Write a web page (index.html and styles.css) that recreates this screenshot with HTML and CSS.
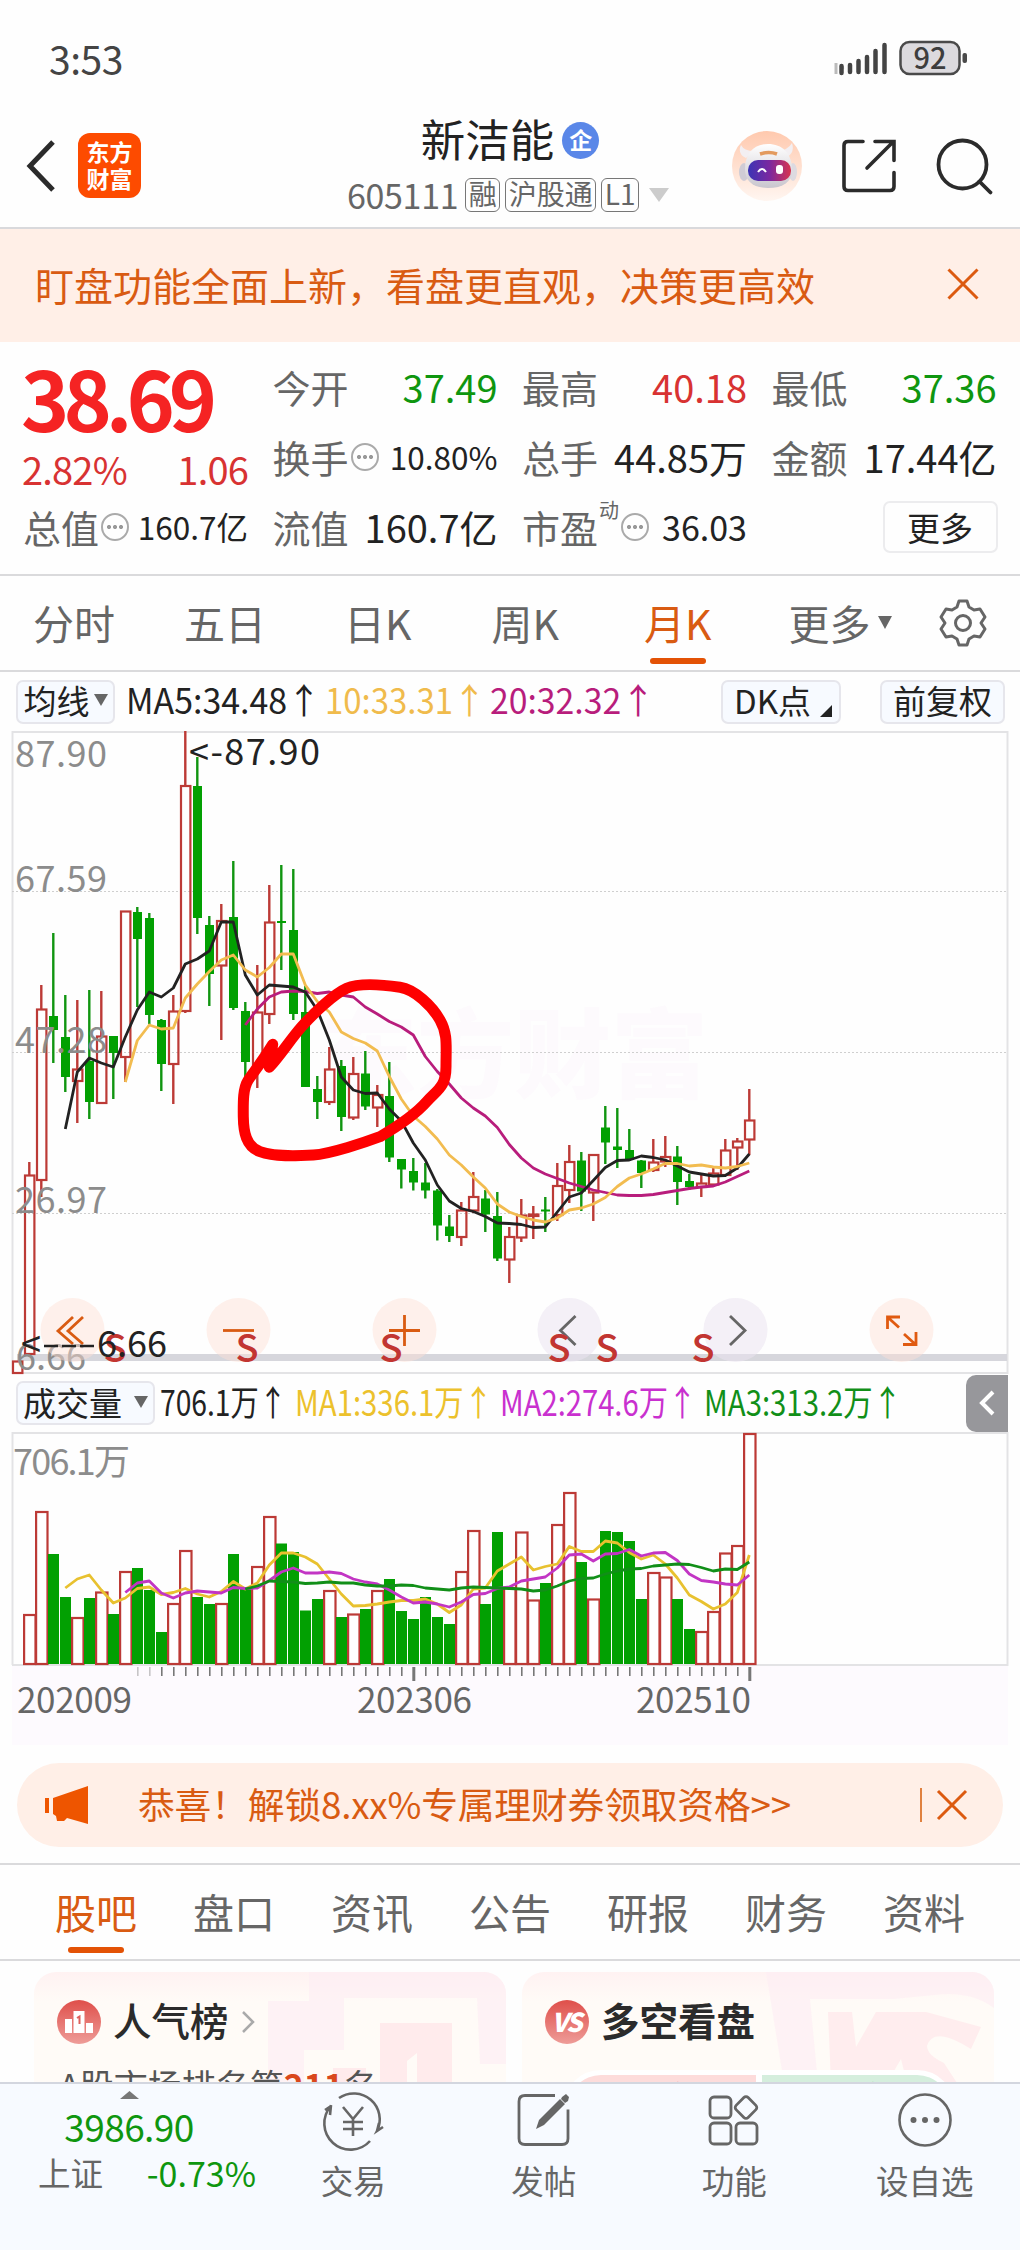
FILE: index.html
```html
<!DOCTYPE html>
<html lang="zh-CN">
<head>
    <meta charset="utf-8">
    <title>新洁能 605111</title>
    <link rel="stylesheet" href="styles.css">
</head>
<body>
    <div class="status-bar">
        <span class="clock">3:53</span>
        <svg class="status-icons" width="138" height="38" viewBox="830 41 138 38">
            <path d="M836 64v11M841 66l2 4" stroke="#bbb" stroke-width="3"/>
            <path d="M841.500 67v7M850 66v7M858.500 62v11M867 58v15M875.500 52v21M884.500 46v27" stroke="#444" stroke-width="4.500" stroke-linecap="round"/>
            <rect x="900.500" y="43" width="59" height="32" rx="9" fill="#dcdade" stroke="#4a4a4a" stroke-width="2.500"/>
            <rect x="962.500" y="54" width="4.500" height="10" rx="2" fill="#4a4a4a"/>
            <text x="930" y="69.500" text-anchor="middle" class="battery-text">92</text>
        </svg>
    </div>

    <header class="header">
        <div class="header-left">
            <svg width="30" height="52" viewBox="0 0 30 52"><path d="M27 2L4 26l23 24" fill="none" stroke="#2b2b2b" stroke-width="5"/></svg>
            <div class="logo"><span>东方</span><span>财富</span></div>
        </div>
        <div class="header-title">
            <div class="stock-name">新洁能<span class="badge">企</span></div>
            <div class="stock-code">
                <span class="code">605111</span>
                <span class="tag">融</span>
                <span class="tag">沪股通</span>
                <span class="tag">L1</span>
                <svg width="20" height="14" viewBox="0 0 20 14"><path d="M0 0h20L10 14z" fill="#ccc"/></svg>
            </div>
        </div>
        <div class="header-right">
            <svg width="70" height="70" viewBox="0 0 70 70">
                <defs>
                    <linearGradient id="halo" x1="0" y1="0" x2="0" y2="1"><stop offset="0" stop-color="#ffc9ae"/><stop offset="1" stop-color="#fff6f1"/></linearGradient>
                    <linearGradient id="visor"><stop offset="0" stop-color="#3b35b5"/><stop offset=".5" stop-color="#7b28a0"/><stop offset="1" stop-color="#d8354f"/></linearGradient>
                    <linearGradient id="helmet" x1="0" y1="0" x2="0" y2="1"><stop offset="0" stop-color="#fff"/><stop offset="1" stop-color="#c9c6ce"/></linearGradient>
                </defs>
                <circle cx="35" cy="35" r="35" fill="url(#halo)"/>
                <path d="M9 14q-4 9 5 13l8-7q-10 0-13-6zM60 12q3 10-5 14l-9-6q10-1 14-8z" fill="#f3eff2"/>
                <ellipse cx="12" cy="41" rx="5" ry="9" fill="#cfccd5"/>
                <ellipse cx="61" cy="41" rx="4" ry="9" fill="#dddae0"/>
                <path d="M13 38C13 22 22 13 36 13s24 9 24 26c0 12-9 18-24 18S13 50 13 38z" fill="url(#helmet)"/>
                <path d="M28 23q9-3 17 0" fill="none" stroke="#e39a5e" stroke-width="3.500"/>
                <rect x="16" y="29" width="43" height="21" rx="10" fill="url(#visor)"/>
                <path d="M26 41q4-6 8 0" fill="none" stroke="#fff" stroke-width="2"/>
                <rect x="44" y="34" width="7" height="9" rx="3" fill="#fff"/>
            </svg>
            <svg width="54" height="54" viewBox="840 138 54 54"><path d="M861 140.500h-15q-4 0-4 4v41q0 4 4 4h42q4 0 4-4v-14M873 140.500h19v19M865 167l26-26" fill="none" stroke="#2b2b2b" stroke-width="3.600" stroke-linecap="round"/></svg>
            <svg width="56" height="56" viewBox="936 136 56 56"><g fill="none" stroke="#2b2b2b" stroke-width="3.800"><circle cx="962.500" cy="162.500" r="24"/><path d="M979.500 179.500L990.500 190.500" stroke-linecap="round"/></g></svg>
        </div>
    </header>

    <div class="banner">
        <span>盯盘功能全面上新，看盘更直观，决策更高效</span>
        <svg width="32" height="32" viewBox="0 0 32 32"><path d="M1.500 1.500l29 29M30.500 1.500l-29 29" stroke="#dc5a10" stroke-width="3"/></svg>
    </div>

    <section class="quote">
        <div class="price-block">
            <div class="price">38.69</div>
            <div class="change"><span>2.82%</span><span>1.06</span></div>
        </div>
        <div class="item"><label>今开</label><b class="down">37.49</b></div>
        <div class="item"><label>最高</label><b class="up">40.18</b></div>
        <div class="item"><label>最低</label><b class="down">37.36</b></div>
        <div class="item"><label>换手</label><i class="more"></i><b class="small">10.80%</b></div>
        <div class="item"><label>总手</label><b>44.85万</b></div>
        <div class="item"><label>金额</label><b>17.44亿</b></div>
        <div class="item"><label>总值</label><i class="more"></i><b class="small">160.7亿</b></div>
        <div class="item"><label>流值</label><b>160.7亿</b></div>
        <div class="item"><label>市盈<sup>动</sup></label><i class="more shifted"></i><b class="medium">36.03</b></div>
        <div class="item"><button class="more-btn">更多</button></div>
    </section>

    <nav class="period-tabs">
        <a>分时</a>
        <a>五日</a>
        <a>日K</a>
        <a>周K</a>
        <a class="active">月K</a>
        <a>更多<svg width="14" height="13" viewBox="0 0 14 13"><path d="M0 0h14L7 13z" fill="#666"/></svg></a>
        <svg class="gear" width="48" height="48" viewBox="0 0 48 48"><g fill="none" stroke="#666" stroke-width="3" stroke-linejoin="round"><path d="M20 2h8l2 6 5 3 6-1 5 8-4 6 4 6-5 8-6-1-5 3-2 6h-8l-2-6-5-3-6 1-5-8 4-6-4-6 5-8 6 1 5-3z"/><circle cx="24" cy="24" r="7.500"/></g></svg>
    </nav>

    <div class="indicator-row ma-row">
        <button class="chip ma-chip">均线<svg width="14" height="12" viewBox="0 0 14 12"><path d="M0 0h14L7 12z" fill="#666"/></svg></button>
        <svg class="indicator-text" width="530" height="48" viewBox="128 678 530 48">
            <text x="126" y="714" textLength="195" lengthAdjust="spacingAndGlyphs" fill="#222">MA5:34.48↑</text>
            <text x="325" y="714" textLength="161" lengthAdjust="spacingAndGlyphs" fill="#f0bb4c">10:33.31↑</text>
            <text x="490" y="714" textLength="165" lengthAdjust="spacingAndGlyphs" fill="#b81d7c">20:32.32↑</text>
        </svg>
        <button class="chip dk-chip">DK点<svg width="12" height="12" viewBox="0 0 12 12"><path d="M12 0v12H0z" fill="#222"/></svg></button>
        <button class="chip fq-chip">前复权</button>
    </div>

    <svg id="kline" class="chart" width="1020" height="643" viewBox="0 731 1020 643"></svg>

    <div class="indicator-row vol-row">
        <button class="chip vol-chip">成交量<svg width="14" height="12" viewBox="0 0 14 12"><path d="M0 0h14L7 12z" fill="#666"/></svg></button>
        <svg class="indicator-text" width="760" height="48" viewBox="160 1379 760 48">
            <text x="160" y="1416" textLength="127" lengthAdjust="spacingAndGlyphs" fill="#222">706.1万↑</text>
            <text x="295" y="1416" textLength="198" lengthAdjust="spacingAndGlyphs" fill="#ecc12c">MA1:336.1万↑</text>
            <text x="500" y="1416" textLength="197" lengthAdjust="spacingAndGlyphs" fill="#c930cf">MA2:274.6万↑</text>
            <text x="704" y="1416" textLength="198" lengthAdjust="spacingAndGlyphs" fill="#118f18">MA3:313.2万↑</text>
        </svg>
        <div class="side-handle"><svg width="16" height="26" viewBox="0 0 16 26"><path d="M14 2L3 13l11 11" fill="none" stroke="#fff" stroke-width="4"/></svg></div>
    </div>

    <svg id="volume" class="chart" width="1020" height="313" viewBox="0 1432 1020 313"></svg>

    <div class="promo">
        <svg width="44" height="38" viewBox="45 1785 44 38"><path d="M45 1797h4v15h-4zM53 1797l35-12v38l-21-6-3 3h-7l-1-5-3-2z" fill="#ee5500"/></svg>
        <span class="promo-text">恭喜！解锁8.xx%专属理财券领取资格&gt;&gt;</span>
        <span class="promo-line"></span>
        <svg width="32" height="32" viewBox="0 0 32 32"><path d="M2 2l28 28M30 2l-28 28" stroke="#dc5a10" stroke-width="3"/></svg>
    </div>

    <nav class="section-tabs">
        <a class="active">股吧</a>
        <a>盘口</a>
        <a>资讯</a>
        <a>公告</a>
        <a>研报</a>
        <a>财务</a>
        <a>资料</a>
    </nav>

    <section class="cards">
        <div class="card">
            <svg class="ghost" width="240" height="111" viewBox="266 1971 240 111">
                <path d="M309 1971h197v92h-26l-3-66H344v52h-40v33h-36v-82h41z" fill="#fdecf3" opacity=".6"/>
                <path d="M380 2022h72v60h-35v-30l-10 8v22h-27zM333 2067h33v15h-33z" fill="#ffe7e9" opacity=".8"/>
            </svg>
            <div class="card-title">
                <svg width="44" height="44" viewBox="0 0 44 44">
                    <defs><linearGradient id="red" x1="0" y1="0" x2="0" y2="1"><stop offset="0" stop-color="#df4f4a"/><stop offset="1" stop-color="#ee9c98"/></linearGradient></defs>
                    <circle cx="22" cy="22" r="22" fill="url(#red)"/>
                    <path d="M8 19h7v14H8zM16.500 11h11v22h-11zM29 23h7v10h-7z" fill="#fff"/>
                    <path d="M20 18l2.500-1.500V24" fill="none" stroke="#dd605b" stroke-width="2"/>
                </svg>
                <span>人气榜</span>
                <svg class="arrow" width="14" height="22" viewBox="0 0 14 22"><path d="M2 1l10 10L2 21" fill="none" stroke="#aaa" stroke-width="2.500"/></svg>
            </div>
            <div class="rank">A股市场排名第<b>211</b>名</div>
        </div>
        <div class="card">
            <svg class="ghost" width="240" height="111" viewBox="754 1971 240 111">
                <path d="M766 1971h228v36q-24-18-60-13l-40 4h-84l8 84h-34z" fill="#fdecf3" opacity=".6"/>
                <path d="M828 2011h24l4 35 20-35h50l55 15-10 22q-38-24-44-3 0 9 17 17l13 20h-50l-6-24-14 24h-56z" fill="#ffe7e9" opacity=".7"/>
            </svg>
            <div class="card-title">
                <svg width="44" height="44" viewBox="0 0 44 44"><circle cx="22" cy="22" r="22" fill="url(#red)"/><text x="21" y="32" text-anchor="middle" class="vs-text">VS</text></svg>
                <span>多空看盘</span>
            </div>
            <div class="vote"><span class="bull">看多</span><span class="bear">看空</span></div>
        </div>
    </section>

    <footer class="bottom-bar">
        <div class="index-box">
            <svg width="19" height="8" viewBox="0 0 19 8"><path d="M0 8L9.500 0 19 8z" fill="#777"/></svg>
            <div class="index-value">3986.90</div>
            <div class="index-row"><span>上证</span><span class="down">-0.73%</span></div>
        </div>
        <div class="bar-item">
            <svg width="64" height="56" viewBox="321 2092 64 56"><g fill="none" stroke="#666" stroke-width="2.600"><path d="M339 2098a26 26 0 0 1 38 33l6-4M377 2131l2-8M370 2141a26 26 0 0 1-39-35l-6 4M331 2105l-1 10M343 2107l10 12 10-12M353 2119v17M343 2122h20M343 2129h20"/></g></svg>
            <span>交易</span>
        </div>
        <div class="bar-item">
            <svg width="56" height="56" viewBox="516 2092 56 56"><path d="M555 2095.500h-30q-6 0-6 6v37q0 6 6 6h37q6 0 6-6v-29" fill="none" stroke="#666" stroke-width="2.800"/><path d="M536 2129l3-9 21-21 5 5-21 21zM562 2097l4-3 3 3-1 4-3 2-4-4z" fill="#666"/></svg>
            <span>发帖</span>
        </div>
        <div class="bar-item">
            <svg width="56" height="56" viewBox="707 2092 56 56"><g fill="none" stroke="#666" stroke-width="2.800"><rect x="711" y="2097" width="21" height="21" rx="4"/><rect x="711" y="2123" width="21" height="21" rx="4"/><rect x="737" y="2123" width="21" height="21" rx="4"/><rect x="738.500" y="2099" width="17" height="17" rx="3" transform="rotate(45 747 2107.500)"/></g></svg>
            <span>功能</span>
        </div>
        <div class="bar-item">
            <svg width="56" height="56" viewBox="0 0 56 56"><circle cx="28" cy="28" r="25.500" fill="none" stroke="#666" stroke-width="2.600"/><g fill="#666"><circle cx="16.500" cy="28" r="3"/><circle cx="28" cy="28" r="3"/><circle cx="39.500" cy="28" r="3"/></g></svg>
            <span>设自选</span>
        </div>
    </footer>
    <script src="script.js"></script>
</body>
</html>
```
FILE: styles.css
```css
* {
    box-sizing: border-box;
}

body {
    margin: 0;
    width: 1020px;
    height: 2250px;
    overflow: hidden;
    background: #fefefe;
    color: #222;
    font-family: "Noto Sans CJK SC", "Noto Sans", sans-serif;
    font-size: 38px;
    line-height: 1;
}

svg {
    display: block;
    flex: none;
    overflow: visible;
}

svg text {
    font-family: "Noto Sans CJK SC", sans-serif;
}

button {
    font-family: inherit;
    color: inherit;
    padding: 0;
}

.up { color: #d83232; }
.down { color: #0f960f; }

/* status bar */
.status-bar {
    display: flex;
    justify-content: space-between;
    align-items: flex-start;
    height: 104px;
    padding: 39px 52px 0 49px;
    color: #444;
}

.clock {
    font-size: 39px;
    letter-spacing: -0.5px;
}

.status-icons {
    margin-top: 1px;
}

.battery-text {
    font-size: 29px;
    font-weight: 500;
    fill: #3d3d3d;
}

/* header */
.header {
    display: grid;
    grid-template-columns: 300px 1fr 300px;
    align-items: center;
    height: 125px;
    border-bottom: 2px solid #d9d9dc;
}

.header-left {
    display: flex;
    align-items: center;
    gap: 22px;
    padding-left: 26px;
}

.logo {
    display: flex;
    flex-direction: column;
    align-items: center;
    justify-content: center;
    width: 63px;
    height: 65px;
    padding-bottom: 2px;
    border-radius: 12px;
    background: #fd4b00;
    color: #fff;
    font-size: 23px;
    font-weight: 700;
    line-height: 27px;
}

.header-title {
    display: flex;
    flex-direction: column;
    align-items: center;
    padding-top: 2px;
}

.stock-name {
    display: flex;
    align-items: center;
    gap: 8px;
    height: 56px;
    font-size: 44.500px;
}

.badge {
    width: 37px;
    height: 37px;
    margin-top: 4px;
    border-radius: 50%;
    background: #5a87e8;
    color: #fff;
    font-size: 23px;
    font-weight: 700;
    line-height: 34px;
    text-align: center;
}

.stock-code {
    display: flex;
    align-items: center;
    gap: 5px;
    height: 56px;
    margin-left: -4px;
    color: #666;
    white-space: nowrap;
}

.stock-code svg {
    margin-left: 5px;
}

.code {
    font-size: 34px;
    margin-right: 2px;
    letter-spacing: -0.3px;
}

.tag {
    height: 34px;
    padding: 0 2.500px;
    border: 1.5px solid #777;
    border-radius: 6px;
    font-size: 28px;
    line-height: 28px;
}

.header-right {
    display: flex;
    align-items: center;
    justify-content: flex-end;
    gap: 40px;
    padding-right: 28px;
}

/* notice */
.banner {
    display: flex;
    justify-content: space-between;
    align-items: center;
    height: 113px;
    padding: 0 41px 3px 35px;
    background: #ffefe7;
    color: #d95b12;
    font-size: 39px;
}

/* quote */
.quote {
    display: grid;
    grid-template-columns: repeat(4, 225px);
    grid-template-rows: repeat(3, 70px);
    column-gap: 24.500px;
    height: 232px;
    padding: 10px 0 0 23px;
}

.price-block {
    grid-row: span 2;
    color: #d83232;
}

.price {
    height: 84px;
    padding-top: 4px;
    margin-left: -2px;
    color: #f52323;
    font-size: 82px;
    font-weight: 700;
    letter-spacing: -6px;
}

.change {
    display: flex;
    justify-content: space-between;
    padding-top: 14px;
    margin-left: -1px;
    letter-spacing: -0.8px;
}

.item {
    display: flex;
    align-items: center;
    white-space: nowrap;
}

.item label {
    position: relative;
    color: #666;
}

.item sup {
    position: absolute;
    left: 77px;
    top: -8px;
    font-size: 20px;
    line-height: 20px;
}

.item b {
    margin-left: auto;
    font-weight: 400;
}

.item .small {
    font-size: 31.500px;
}

.item .medium {
    font-size: 34px;
}

/* circled three dots */
.more {
    width: 28px;
    height: 28px;
    margin-left: 2px;
    border: 2px solid #aaa;
    border-radius: 50%;
    background: radial-gradient(circle, #999 1.800px, transparent 2.300px) center / 6px 6px no-repeat,
        radial-gradient(circle, #999 1.800px, transparent 2.300px) 3px center / 6px 6px no-repeat,
        radial-gradient(circle, #999 1.800px, transparent 2.300px) 15px center / 6px 6px no-repeat;
}

.more.shifted {
    margin-left: 23px;
}

.more-btn {
    width: 115px;
    height: 52px;
    margin: 0 -1px 0 auto;
    border: 2px solid #ececee;
    border-radius: 7px;
    background: none;
    font-size: 33px;
    line-height: 44px;
}

/* tabs */
.period-tabs,
.section-tabs {
    display: flex;
    height: 98px;
    border-top: 2px solid #dadadc;
    border-bottom: 2px solid #dadadc;
    color: #666;
    font-size: 41px;
}

.period-tabs {
    padding-left: 33px;
}

.period-tabs a,
.section-tabs a {
    display: flex;
    flex-direction: column;
    justify-content: center;
    position: relative;
    padding-bottom: 2px;
}

.period-tabs a:nth-child(2) { margin-left: 69px; }
.period-tabs a:nth-child(3) { margin-left: 78px; }
.period-tabs a:nth-child(4) { margin-left: 80px; }
.period-tabs a:nth-child(5) { margin-left: 85px; }

.period-tabs a:nth-child(6) {
    flex-direction: row;
    align-items: center;
    gap: 7px;
    margin-left: 77px;
}

.active {
    color: #d95b12;
}

.active::after {
    content: "";
    position: absolute;
    bottom: 6px;
    left: calc(50% - 28px);
    width: 56px;
    height: 6px;
    border-radius: 3px;
    background: #e35205;
}

.gear {
    align-self: center;
    margin-left: auto;
    margin-right: 33px;
}

/* indicator rows */
.indicator-row {
    display: flex;
    align-items: center;
    padding-left: 16px;
}

.ma-row {
    height: 59px;
}

.vol-row {
    height: 58px;
}

.chip {
    display: flex;
    align-items: center;
    justify-content: center;
    height: 44px;
    padding-bottom: 3px;
    border: 2px solid #e6e6ec;
    border-radius: 7px;
    background: #f7faff;
    font-size: 33px;
    line-height: 38px;
}

.chip svg {
    margin-left: 4px;
}

.ma-chip {
    width: 99px;
}

.ma-row .indicator-text {
    margin-left: 13px;
}

.dk-chip {
    width: 120px;
    margin-left: 63px;
}

.dk-chip svg {
    align-self: flex-end;
    margin: 0 -4px 2px 9px;
}

.fq-chip {
    width: 125px;
    margin-left: 39px;
}

.vol-chip {
    width: 139px;
}

.vol-chip svg {
    margin-left: 12px;
}

.vol-row .indicator-text {
    margin-left: 5px;
}

.indicator-text text {
    font-size: 35px;
}

.side-handle {
    display: flex;
    align-items: center;
    justify-content: center;
    width: 42px;
    height: 57px;
    margin-left: 46px;
    border-radius: 10px 0 0 10px;
    background: #97979b;
}

/* charts */
.axis { font-size: 36px; fill: #8c8c8c; }
.date { font-size: 35px; fill: #666; }
.mark { font-size: 36px; fill: #222; }
.sell { font-size: 38px; font-weight: 500; fill: #c23531; }
.watermark { font-size: 97px; font-weight: 900; fill: #fdfafd; }

/* promo */
.promo {
    display: flex;
    align-items: center;
    height: 84px;
    margin: 18px 17px 16px;
    padding: 0 35px 0 28px;
    border-radius: 42px;
    background: #ffefe7;
    color: #d95b12;
    font-size: 36.800px;
}

.promo-text {
    margin-left: 49px;
    padding-bottom: 3px;
    letter-spacing: -0.2px;
    white-space: nowrap;
}

.promo-line {
    width: 2px;
    height: 34px;
    margin: 0 14px 0 auto;
    background: #e0813f;
}

.section-tabs {
    justify-content: space-between;
    padding: 0 55px;
}

/* cards */
.cards {
    display: flex;
    gap: 16px;
    height: 121px;
    padding: 11px 26px 0 34px;
    overflow: hidden;
}

.card {
    position: relative;
    width: 472px;
    height: 200px;
    padding: 28px 23px;
    border-radius: 22px;
    background: linear-gradient(#fff2f2, #fffbf7 30px);
    overflow: hidden;
}

.ghost {
    position: absolute;
    top: 0;
    right: 0;
}

.card-title {
    display: flex;
    align-items: center;
    gap: 12px;
    position: relative;
    height: 44px;
    font-size: 38.500px;
    font-weight: 700;
    color: #2b2b2b;
}

.card:first-child .card-title {
    font-weight: 500;
}

.card-title span {
    padding-bottom: 5px;
}

.vs-text {
    font-size: 26px;
    font-weight: 900;
    font-style: italic;
    letter-spacing: -2px;
    fill: #fff;
}

.rank {
    position: relative;
    margin-top: 24px;
    padding-left: 2px;
    color: #555;
    font-size: 34px;
}

.rank b {
    color: #d9481c;
}

.vote {
    display: flex;
    gap: 6px;
    position: relative;
    width: 392px;
    height: 76px;
    margin: 26px 0 0 18px;
    border: 5px solid #fff;
    border-radius: 38px;
    background: #fff;
    overflow: hidden;
    font-size: 34px;
    line-height: 44px;
    text-align: center;
}

.bull {
    flex: 1;
    background: #fddcdb;
    color: #c23531;
}

.bear {
    flex: 1;
    background: #d5eedd;
    color: #159a4c;
}

/* bottom bar */
.bottom-bar {
    display: flex;
    position: relative;
    height: 168px;
    border-top: 2px solid #d3d6df;
    background: #f7faff;
    color: #666;
    font-size: 32.500px;
}

.index-box {
    display: flex;
    flex-direction: column;
    align-items: center;
    width: 258px;
    padding-top: 7px;
}

.index-value {
    margin-top: 9px;
    color: #0f960f;
    font-size: 37px;
    letter-spacing: -0.6px;
}

.index-row {
    display: flex;
    justify-content: space-between;
    width: 218px;
    margin: 11px -36px 0 0;
}

.index-row .down {
    font-size: 34px;
}

.bar-item {
    display: flex;
    flex-direction: column;
    align-items: center;
    gap: 16px;
    flex: 1;
    padding-top: 8px;
}
```
FILE: script.js
```javascript
// candle: [color, high, open/close top, open/close bottom, low]
const candles = [
    ["r", 1361, 1361, 1373, 1373], ["r", 1162, 1175, 1354, 1354], ["r", 985, 1009, 1180, 1197], ["g", 933, 1016, 1030, 1063],
    ["g", 995, 1037, 1077, 1092], ["r", 1000, 1069, 1081, 1123], ["g", 990, 1061, 1102, 1119], ["r", 991, 1036, 1103, 1103],
    ["g", 1036, 1036, 1053, 1099], ["r", 911, 911, 1057, 1082], ["g", 907, 912, 939, 1007], ["g", 913, 918, 1015, 1024],
    ["g", 1019, 1020, 1064, 1091], ["r", 995, 1011, 1064, 1104], ["r", 731, 785.5, 1011, 1013], ["g", 757, 786, 918, 934],
    ["g", 916, 925, 974, 1006], ["r", 904, 920.5, 965.5, 1040], ["g", 861, 917, 1008, 1010], ["g", 1002, 1011, 1062, 1079],
    ["r", 965, 1012, 1067, 1088], ["r", 885, 922, 1014, 1024], ["g", 865, 921, 923, 970], ["g", 869, 930, 1014, 1020],
    ["g", 986, 1012, 1087, 1087], ["g", 1076, 1089, 1102, 1119], ["r", 1047, 1069, 1102, 1105], ["g", 1060, 1066, 1117, 1131],
    ["r", 1057, 1073.5, 1117.5, 1120], ["g", 1051, 1073.5, 1106.5, 1110], ["r", 1085, 1094.5, 1107.5, 1127], ["g", 1062, 1096, 1157.5, 1162],
    ["g", 1159, 1159, 1169.5, 1188.5], ["g", 1158, 1171, 1182.5, 1190.5], ["g", 1163, 1182.5, 1190.5, 1198.5], ["g", 1189, 1190.5, 1225.5, 1240.5],
    ["g", 1215, 1226.5, 1236, 1242], ["r", 1202, 1210, 1237, 1246], ["r", 1172, 1196.5, 1210.5, 1213], ["g", 1190, 1198.5, 1214.5, 1232],
    ["g", 1192, 1216, 1258.5, 1261], ["r", 1227, 1236.5, 1259.5, 1283], ["r", 1199, 1215, 1237.5, 1242], ["r", 1206, 1214, 1216, 1239],
    ["g", 1197, 1209.5, 1211.5, 1232], ["r", 1163, 1185.5, 1215, 1221], ["r", 1145, 1161.5, 1190, 1203], ["g", 1152, 1160.5, 1191.5, 1211],
    ["r", 1154, 1154.5, 1192.5, 1221], ["g", 1106, 1127.5, 1142.5, 1164], ["g", 1108, 1146.5, 1150, 1168], ["g", 1129, 1150, 1160, 1161],
    ["g", 1160, 1160.5, 1173, 1188], ["r", 1139, 1162, 1170, 1172], ["r", 1136, 1156.5, 1161.5, 1167], ["g", 1146, 1156.5, 1182, 1205],
    ["g", 1174, 1181, 1187, 1190], ["r", 1173, 1183, 1187, 1197], ["r", 1166, 1173, 1184.5, 1187], ["r", 1139, 1150, 1175, 1175],
    ["r", 1138, 1141, 1147.5, 1170], ["r", 1089, 1120, 1139.5, 1155]
];

const volumes = [1663, 1614, 1511, 1554, 1597, 1617, 1598, 1591.5, 1614, 1571, 1568, 1590, 1632, 1603, 1550, 1597,
    1604, 1603, 1554, 1588, 1566, 1516, 1543.5, 1552, 1610.5, 1599, 1590, 1617, 1613.5, 1609, 1590, 1579,
    1611, 1619, 1597, 1617, 1624, 1571, 1530, 1604, 1532, 1587, 1531.5, 1599.5, 1583, 1524, 1492, 1562,
    1598.5, 1531, 1532, 1541, 1599, 1572, 1576.5, 1599, 1629, 1631, 1611, 1552.5, 1545, 1433];

// moving averages, first value sits on candle number "from"
const priceLines = [
    { from: 19, color: "#b81d7c", y: [1025, 1009, 997, 992, 991, 991.5, 993.5, 992, 995, 997, 1007, 1014, 1021.5, 1027, 1035, 1056.5, 1071.5, 1084, 1098, 1108, 1116, 1127.5, 1144.5, 1158, 1168, 1174, 1178.5, 1183, 1186.5, 1190, 1192.5, 1195, 1195.5, 1195.5, 1194.5, 1192.5, 1190.5, 1188.5, 1187, 1186, 1182, 1176.5, 1171] },
    { from: 4, color: "#222", y: [1129, 1072, 1058, 1063, 1067, 1037, 1010, 992, 997, 988, 964, 959, 951, 922, 922, 975, 995, 985, 986, 987, 992, 1010, 1040, 1077, 1090, 1093.5, 1093, 1109, 1121, 1143, 1160, 1185, 1201, 1208.5, 1211.5, 1216.5, 1223, 1223.5, 1224.5, 1227.5, 1227, 1212, 1197, 1193, 1180.5, 1167.5, 1160.5, 1160, 1156, 1157.5, 1160, 1166, 1172, 1174, 1176, 1175.5, 1168, 1154] },
    { from: 9, color: "#f2bc50", y: [1082, 1040.5, 1025, 1029, 1028, 998, 984, 971.5, 960, 955, 970, 977, 967.5, 954, 954, 985, 1001.5, 1012, 1032, 1038.5, 1043, 1051, 1076.5, 1099, 1116, 1126.5, 1139, 1155, 1165, 1177, 1188, 1204, 1212, 1216.5, 1220, 1222, 1218, 1210, 1208, 1204, 1197.5, 1186.5, 1178, 1174, 1169, 1163.5, 1163.5, 1166, 1165, 1167, 1168, 1166.5, 1163] }
];

const volumeLines = [
    { from: 4, color: "#e8c12f", y: [1588, 1579, 1575, 1590, 1603, 1598, 1588.5, 1587, 1594.5, 1592.5, 1588.5, 1594, 1597, 1591.5, 1581.5, 1589, 1583, 1565, 1553, 1553, 1557, 1564, 1579, 1594, 1606, 1605.5, 1604, 1602, 1600.5, 1600.5, 1599, 1604, 1612.5, 1605, 1589, 1588, 1571, 1564, 1557, 1570, 1566.5, 1564, 1546.5, 1551.5, 1551.5, 1541, 1543, 1552.5, 1559, 1555, 1564, 1578, 1595, 1601.5, 1609, 1604, 1592.5, 1555] },
    { from: 9, color: "#c235c4", y: [1592.5, 1583, 1581, 1593, 1598, 1593, 1591, 1592, 1593, 1587.5, 1588.5, 1588, 1580.5, 1572, 1568, 1573, 1573, 1572, 1573.5, 1579, 1582, 1584, 1590, 1597, 1603, 1602, 1604, 1607, 1602, 1594.5, 1593.5, 1588.5, 1587, 1581, 1579, 1577, 1568, 1555, 1554, 1561, 1554, 1553.5, 1549.5, 1556, 1553, 1552.5, 1560.5, 1574, 1580.5, 1582, 1584, 1585, 1575] },
    { from: 19, color: "#118f18", y: [1589, 1586, 1581, 1581.5, 1582, 1583.5, 1583, 1582, 1583, 1583, 1585, 1586, 1586, 1585, 1585.5, 1588, 1589, 1590, 1588, 1587, 1587.5, 1588, 1588.5, 1589, 1591, 1590, 1586, 1581, 1578.5, 1578, 1574, 1571, 1569, 1568.5, 1566, 1565, 1564, 1564.5, 1567.5, 1571, 1569, 1569.5, 1562] }
];

const RED = "#bc3a36";
const GREEN = "#02a002";

function xAt(i) {
    return 17.3 + i * 12;
}

function drawLines(lines) {
    return lines.map(function (line) {
        const pts = line.y.map((y, k) => xAt(line.from + k).toFixed(1) + "," + y).join(" ");
        return `<polyline points="${pts}" fill="none" stroke="${line.color}" stroke-width="2.8" stroke-linejoin="round"/>`;
    }).join("");
}

function drawCandle(c, i) {
    const x = xAt(i);
    if (c[0] === "g") {
        return `<path d="M${x} ${c[1]}V${c[4]}" stroke="#109510" stroke-width="2.4"/>
            <rect x="${x - 4.3}" y="${c[2]}" width="9" height="${c[3] - c[2]}" fill="${GREEN}"/>`;
    }
    return `<path d="M${x} ${c[1]}V${c[2]}M${x} ${c[3]}V${c[4]}" stroke="${RED}" stroke-width="2.4"/>
        <rect x="${x - 4.3}" y="${c[2] + 0.5}" width="9.4" height="${Math.max(1, c[3] - c[2] - 0.5)}" fill="none" stroke="${RED}" stroke-width="2.2"/>`;
}

function circleBtn(x, color, icon) {
    const bg = color === "#666" ? "rgba(235,228,240,.55)" : "rgba(255,225,212,.45)";
    return `<circle cx="${x}" cy="1330" r="32" fill="${bg}"/><path d="${icon}" fill="none" stroke="${color}" stroke-width="2.800"/>`;
}

function drawKline() {
    let s = `<text x="320" y="1090" class="watermark">东方财富</text>`;
    s += `<path d="M12.500 1374V732H1007.500V1374" fill="none" stroke="#e3e3e5" stroke-width="2"/><path d="M12 1373H1008" stroke="#e3e3e5" stroke-width="2"/>`;
    [891.5, 1052.5, 1213.5].forEach(y => {
        s += `<path d="M12 ${y}H1007" stroke="#cfcfcf" stroke-width="1" stroke-dasharray="2 2"/>`;
    });
    s += `<rect x="17" y="1354" width="990" height="7" fill="#d6d6dc"/>`;
    s += candles.map(drawCandle).join("");
    s += drawLines(priceLines);
    [["87.90", 767], ["67.59", 892], ["47.28", 1053], ["26.97", 1213]].forEach(a => {
        s += `<text x="15" y="${a[1]}" textLength="92" class="axis">${a[0]}</text>`;
    });
    s += `<text x="16" y="1370" textLength="70" class="axis">6.66</text>`;
    s += circleBtn(72.5, "#d95b12", "M73 1317l-15 14 15 13M83 1317l-15 14 15 13");
    s += circleBtn(238.5, "#d95b12", "M223 1330.500h31");
    s += circleBtn(404.5, "#d95b12", "M389 1330.500h31M404.500 1315v31");
    s += circleBtn(569.5, "#666", "M575.500 1316l-15 14.500 15 14.500");
    s += circleBtn(735.5, "#666", "M730 1316l15 14.500-15 14.500");
    s += circleBtn(901.5, "#e05a10", "M887.500 1329v-12h12.500M888 1317.500l11 10M904 1334l11 10M903 1344.500h13v-12.500");
    s += `<text x="189" y="765" textLength="131" class="mark">&lt;-87.90</text>`;
    s += `<text x="21" y="1357" class="mark">&lt;</text><path d="M44 1346h14M62 1346h14M80 1346h14" stroke="#222" stroke-width="2.500"/>`;
    [115, 247, 391, 559, 607, 703].forEach(x => {
        s += `<text x="${x}" y="1362" text-anchor="middle" class="sell">S</text>`;
    });
    s += `<text x="97" y="1357" textLength="70" class="mark">6.66</text>`;
    // hand-drawn loop
    s += `<path d="M272.700 1044.300L269.300 1067.300C280 1056 290 1040 301.700 1026.700S334 994 346.700 988.300 385 985 400 987.300 432 1006 440 1020 446 1046 446 1066.700 437 1090 426.700 1101.700 395 1128 380 1136.700C366 1142 330 1154 313.300 1155C296 1156 274 1157 260 1151.700S243.500 1132 243.300 1116.700 243 1088 248.300 1080S262 1062 272.700 1044.300Z" fill="none" stroke="#fe0000" stroke-width="11" stroke-linejoin="round"/>`;
    document.getElementById("kline").innerHTML = s;
}

function drawVolume() {
    let s = `<rect x="12" y="1666" width="996" height="79" fill="#fdfafe"/>
        <path d="M12.500 1665V1433H1007.500V1665H12" fill="none" stroke="#e3e3e5" stroke-width="2"/>`;
    volumes.forEach((y, i) => {
        const x = xAt(i);
        if (candles[i][0] === "g") {
            s += `<rect x="${x - 5.3}" y="${y}" width="11" height="${1664 - y}" fill="${GREEN}"/>`;
        } else {
            s += `<rect x="${x - 5.2}" y="${y + 1}" width="11.4" height="${1663 - y}" fill="#fff" stroke="${RED}" stroke-width="2.200"/>`;
        }
        if (i > 9) {
            const major = i === 33 || i === 61;
            s += `<path d="M${x + 0.5} 1667v${major ? 14 : 9}" stroke="#777" stroke-width="${major ? 3 : 1.6}" opacity="${i < 12 ? 0.4 : 1}"/>`;
        }
    });
    s += drawLines(volumeLines);
    s += `<text x="13" y="1475" textLength="117" class="axis">706.1万</text>`;
    s += `<text x="17" y="1713" textLength="115" class="date">202009</text>
        <text x="357" y="1713" textLength="115" class="date">202306</text>
        <text x="636" y="1713" textLength="115" class="date">202510</text>`;
    document.getElementById("volume").innerHTML = s;
}

drawKline();
drawVolume();
```
